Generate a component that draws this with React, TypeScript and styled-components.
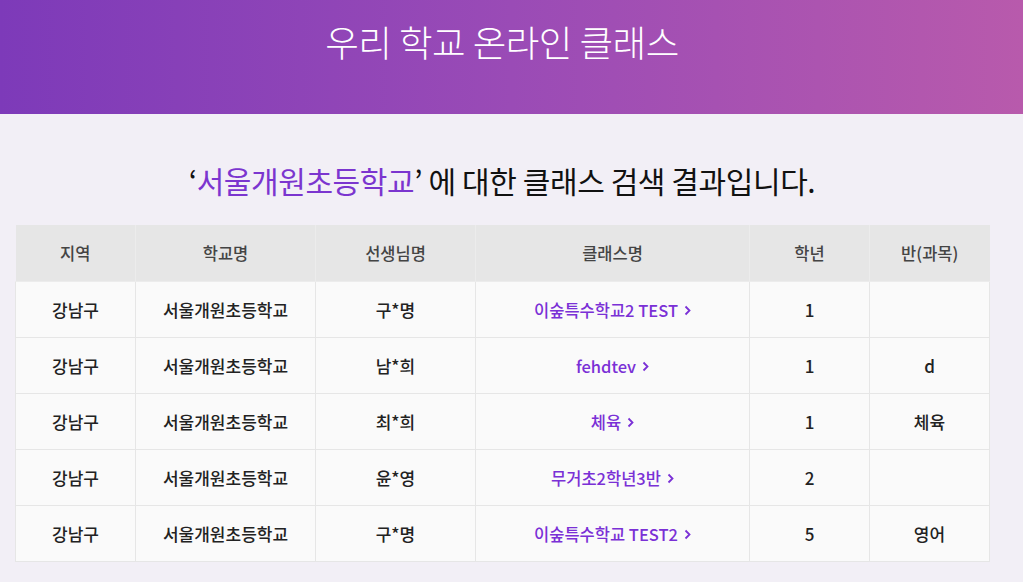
import * as React from 'react';
import styled, { createGlobalStyle } from 'styled-components';

const GlobalStyle = createGlobalStyle`
  html, body {
    margin: 0;
    padding: 0;
    background: #f2eff6;
  }
  body {
    font-family: 'Noto Sans CJK KR', 'Noto Sans', sans-serif;
    color: #222;
  }
`;

interface ClassRow {
  region: string;
  school: string;
  teacher: string;
  className: string;
  grade: string;
  subject: string;
}

const rows: ClassRow[] = [
  { region: '강남구', school: '서울개원초등학교', teacher: '구*명', className: '이숲특수학교2 TEST', grade: '1', subject: '' },
  { region: '강남구', school: '서울개원초등학교', teacher: '남*희', className: 'fehdtev', grade: '1', subject: 'd' },
  { region: '강남구', school: '서울개원초등학교', teacher: '최*희', className: '체육', grade: '1', subject: '체육' },
  { region: '강남구', school: '서울개원초등학교', teacher: '윤*영', className: '무거초2학년3반', grade: '2', subject: '' },
  { region: '강남구', school: '서울개원초등학교', teacher: '구*명', className: '이숲특수학교 TEST2', grade: '5', subject: '영어' },
];

const columns = [
  { label: '지역', width: 120 },
  { label: '학교명', width: 180 },
  { label: '선생님명', width: 160 },
  { label: '클래스명', width: 274 },
  { label: '학년', width: 120 },
  { label: '반(과목)', width: 120 },
];

const Page = styled.div`
  min-height: 582px;
  background: #f2eff6;
`;

const Header = styled.header`
  height: 114px;
  background: linear-gradient(90deg, #7d3ab9 0%, #9a4bb6 50%, #b85aac 100%);
  display: flex;
  justify-content: center;
  padding: 16px 19px 0 0;
  box-sizing: border-box;
`;

const Title = styled.h1`
  margin: 0;
  color: #fff;
  font-size: 36.5px;
  font-weight: 300;
  line-height: 52px;
  letter-spacing: -0.5px;
`;

const Main = styled.main`
  padding: 41px 34px 0 15px;
`;

const ResultText = styled.h2`
  margin: 0 0 19px;
  text-align: center;
  font-size: 30px;
  font-weight: 400;
  line-height: 51px;
  color: #111;
  letter-spacing: -0.4px;
`;

const Keyword = styled.span`
  color: #7b35cf;
`;

const Table = styled.table`
  width: 974px;
  border-collapse: collapse;
  table-layout: fixed;
`;

const HeadCell = styled.th`
  height: 56px;
  padding: 0;
  background: #e6e6e6;
  border: 1px solid #ececec;
  border-top: none;
  color: #444;
  font-size: 16.5px;
  font-weight: 500;
  text-align: center;
  &:first-child { border-left: none; }
  &:last-child { border-right: none; }
`;

const Cell = styled.td`
  height: 55px;
  padding: 0;
  background: #fafafa;
  border: 1px solid #e6e6e6;
  color: #222;
  font-size: 17px;
  font-weight: 500;
  text-align: center;
`;

const ClassLink = styled.a`
  color: #7a30d6;
  font-size: 16.5px;
  font-weight: 500;
  text-decoration: none;
  display: inline-flex;
  align-items: center;
  gap: 6px;
  cursor: pointer;
`;

const Chevron = () => (
  <svg width="7" height="11" viewBox="0 0 7 11" aria-hidden="true">
    <path d="M1.5 1.5 L5.5 5.5 L1.5 9.5" fill="none" stroke="currentColor" strokeWidth="1.8" />
  </svg>
);

export default function App() {
  return (
    <Page>
      <GlobalStyle />
      <Header>
        <Title>우리 학교 온라인 클래스</Title>
      </Header>
      <Main>
        <ResultText>
          ‘<Keyword>서울개원초등학교</Keyword>’ 에 대한 클래스 검색 결과입니다.
        </ResultText>
        <Table>
          <colgroup>
            {columns.map((c) => (
              <col key={c.label} style={{ width: c.width }} />
            ))}
          </colgroup>
          <thead>
            <tr>
              {columns.map((c) => (
                <HeadCell key={c.label}>{c.label}</HeadCell>
              ))}
            </tr>
          </thead>
          <tbody>
            {rows.map((r, i) => (
              <tr key={i}>
                <Cell>{r.region}</Cell>
                <Cell>{r.school}</Cell>
                <Cell>{r.teacher}</Cell>
                <Cell>
                  <ClassLink>
                    {r.className}
                    <Chevron />
                  </ClassLink>
                </Cell>
                <Cell>{r.grade}</Cell>
                <Cell>{r.subject}</Cell>
              </tr>
            ))}
          </tbody>
        </Table>
      </Main>
    </Page>
  );
}
